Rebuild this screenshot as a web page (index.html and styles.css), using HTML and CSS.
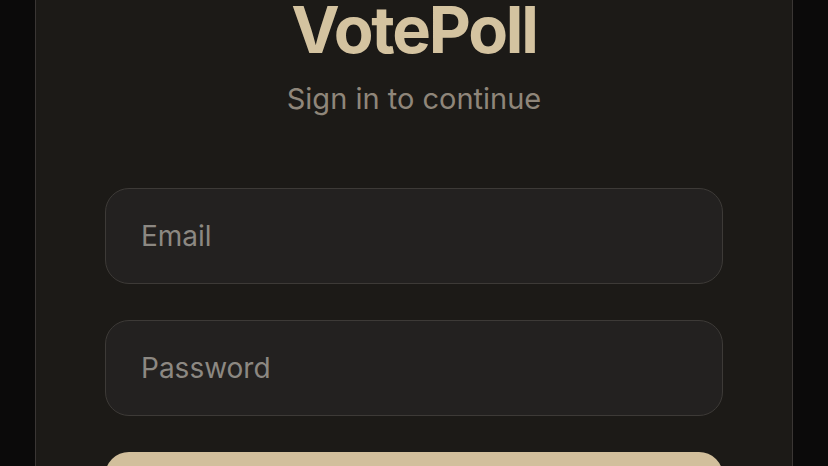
FILE: index.html
```html
<!DOCTYPE html>
<html>
  <head>
    <title>VotePoll - Sign in</title>
    <link rel="stylesheet" href="styles.css">
  </head>
  <body>
    <div class="card">
      <h1 class="brand">VotePoll</h1>
      <p class="tagline">Sign in to continue</p>
      <form class="login-form">
        <input type="email" class="field" placeholder="Email" />
        <input type="password" class="field" placeholder="Password" />
        <button type="submit" class="submit-btn">Sign In</button>
      </form>
    </div>
  </body>
</html>
```

FILE: styles.css
```css
/* Login screen */
body {
  margin: 0;
  background-color: #0b0a0a;
  font-family: Inter, "Noto Sans", Arial, sans-serif;
  overflow: hidden;
}

.card {
  width: 758px;
  margin: -40px auto 0;
  padding: 36px 69px 60px;
  box-sizing: border-box;
  background-color: #1c1a17;
  border: 1px solid #3a3634;
  border-radius: 28px;
  min-height: 600px;
}

.brand {
  margin: 0;
  text-align: center;
  font-size: 65px;
  line-height: 66px;
  font-weight: 700;
  letter-spacing: -2.2px;
  color: #d4c3a0;
}

.tagline {
  margin: 22px 0 0;
  text-align: center;
  font-size: 29px;
  line-height: 28px;
  color: #8f867a;
}

.login-form {
  display: flex;
  flex-direction: column;
  gap: 36px;
  margin-top: 75px;
}

.field {
  height: 96px;
  padding: 0 35px;
  box-sizing: border-box;
  background-color: #232120;
  border: 1.5px solid #3d3a37;
  border-radius: 24px;
  font-family: inherit;
  font-size: 28px;
  color: #d8d2c8;
  outline: none;
}

.field::placeholder {
  color: #8c8882;
}

.submit-btn {
  height: 96px;
  background-color: #d2bf9c;
  border: none;
  border-radius: 24px;
  font-family: inherit;
  font-size: 28px;
  font-weight: 600;
  color: #1c1a17;
}
```
